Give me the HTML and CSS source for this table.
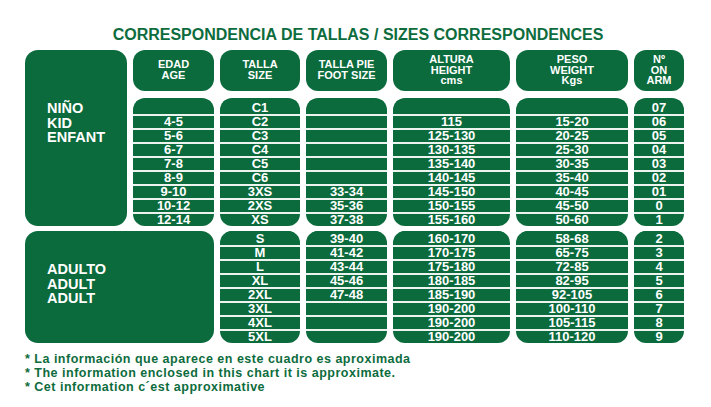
FILE: index.html
```html
<!DOCTYPE html>
<html lang="es">
<head>
<meta charset="utf-8">
<title>Correspondencia de tallas</title>
<link rel="stylesheet" href="styles.css">
</head>
<body>
<div class="page">
  <h1 class="title">CORRESPONDENCIA DE TALLAS / SIZES CORRESPONDENCES</h1>
  <div class="chart">
    <div class="group group-kid">NIÑO<br>KID<br>ENFANT</div>

    <div class="head">EDAD<br>AGE</div>
    <div class="head">TALLA<br>SIZE</div>
    <div class="head">TALLA PIE<br>FOOT SIZE</div>
    <div class="head">ALTURA<br>HEIGHT<br>cms</div>
    <div class="head">PESO<br>WEIGHT<br>Kgs</div>
    <div class="head">Nº<br>ON<br>ARM</div>

    <div class="col kid">
      <div class="row"></div><div class="row">4-5</div><div class="row">5-6</div><div class="row">6-7</div><div class="row">7-8</div><div class="row">8-9</div><div class="row">9-10</div><div class="row">10-12</div><div class="row">12-14</div>
    </div>
    <div class="col kid">
      <div class="row">C1</div><div class="row">C2</div><div class="row">C3</div><div class="row">C4</div><div class="row">C5</div><div class="row">C6</div><div class="row">3XS</div><div class="row">2XS</div><div class="row">XS</div>
    </div>
    <div class="col kid">
      <div class="row"></div><div class="row"></div><div class="row"></div><div class="row"></div><div class="row"></div><div class="row"></div><div class="row">33-34</div><div class="row">35-36</div><div class="row">37-38</div>
    </div>
    <div class="col kid">
      <div class="row"></div><div class="row">115</div><div class="row">125-130</div><div class="row">130-135</div><div class="row">135-140</div><div class="row">140-145</div><div class="row">145-150</div><div class="row">150-155</div><div class="row">155-160</div>
    </div>
    <div class="col kid">
      <div class="row"></div><div class="row">15-20</div><div class="row">20-25</div><div class="row">25-30</div><div class="row">30-35</div><div class="row">35-40</div><div class="row">40-45</div><div class="row">45-50</div><div class="row">50-60</div>
    </div>
    <div class="col kid">
      <div class="row">07</div><div class="row">06</div><div class="row">05</div><div class="row">04</div><div class="row">03</div><div class="row">02</div><div class="row">01</div><div class="row">0</div><div class="row">1</div>
    </div>

    <div class="group group-adult">ADULTO<br>ADULT<br>ADULT</div>

    <div class="col adult">
      <div class="row">S</div><div class="row">M</div><div class="row">L</div><div class="row">XL</div><div class="row">2XL</div><div class="row">3XL</div><div class="row">4XL</div><div class="row">5XL</div>
    </div>
    <div class="col adult">
      <div class="row">39-40</div><div class="row">41-42</div><div class="row">43-44</div><div class="row">45-46</div><div class="row">47-48</div><div class="row"></div><div class="row"></div><div class="row"></div>
    </div>
    <div class="col adult">
      <div class="row">160-170</div><div class="row">170-175</div><div class="row">175-180</div><div class="row">180-185</div><div class="row">185-190</div><div class="row">190-200</div><div class="row">190-200</div><div class="row">190-200</div>
    </div>
    <div class="col adult">
      <div class="row">58-68</div><div class="row">65-75</div><div class="row">72-85</div><div class="row">82-95</div><div class="row">92-105</div><div class="row">100-110</div><div class="row">105-115</div><div class="row">110-120</div>
    </div>
    <div class="col adult">
      <div class="row">2</div><div class="row">3</div><div class="row">4</div><div class="row">5</div><div class="row">6</div><div class="row">7</div><div class="row">8</div><div class="row">9</div>
    </div>
  </div>
  <div class="notes">
    <p>* La información que aparece en este cuadro es aproximada</p>
    <p>* The information enclosed in this chart it is approximate.</p>
    <p>* Cet information c´est approximative</p>
  </div>
</div>
</body>
</html>
```

FILE: styles.css
```css
* { box-sizing: border-box; }

html, body {
  margin: 0;
  padding: 0;
  background: #ffffff;
}

body {
  font-family: "Liberation Sans", Arial, sans-serif;
  font-weight: bold;
}

.page {
  width: 711px;
  height: 407px;
  padding: 26px 0 0 25px;
  overflow: hidden;
}

.title {
  width: 659px;
  margin: 0 0 6px 0;
  padding-left: 7px;
  font-size: 16px;
  line-height: 18px;
  font-weight: bold;
  color: #0d6c3d;
  text-align: center;
  white-space: nowrap;
}

.chart {
  display: grid;
  grid-template-columns: 102px 81px 80px 81px 117px 112px 50px;
  grid-template-rows: 41px 7px 128px 5px 112px;
  column-gap: 6px;
  width: 659px;
}

.group {
  background: #0b6b3c;
  color: #ffffff;
  border-radius: 13px;
  font-size: 14.5px;
  line-height: 14.5px;
  padding-left: 22px;
}

.group-kid {
  grid-column: 1;
  grid-row: 1 / 4;
  padding-top: 51px;
}

.group-adult {
  grid-column: 1 / 3;
  grid-row: 5;
  padding-top: 31px;
}

.head {
  grid-row: 1;
  background: #0b6b3c;
  color: #ffffff;
  border-radius: 12px;
  font-size: 11px;
  line-height: 10.7px;
  text-align: center;
  display: flex;
  flex-direction: column;
  justify-content: center;
  padding-bottom: 1px;
}

.col {
  background: #0b6b3c;
  border-radius: 12px;
  overflow: hidden;
  display: flex;
  flex-direction: column;
}

.kid {
  grid-row: 3;
  padding-top: 2px;
}

.adult {
  grid-row: 5;
}

.row {
  height: 14px;
  border-top: 2px solid #edf3ef;
  color: #ffffff;
  font-size: 13px;
  line-height: 12px;
  text-align: center;
  white-space: nowrap;
}

.row:first-child {
  border-top-color: #0b6b3c;
}

.notes {
  margin-top: 9px;
  color: #0d6c3d;
  font-size: 12.5px;
  line-height: 14px;
  letter-spacing: 0.5px;
}

.notes p {
  margin: 0;
  white-space: nowrap;
}
```
